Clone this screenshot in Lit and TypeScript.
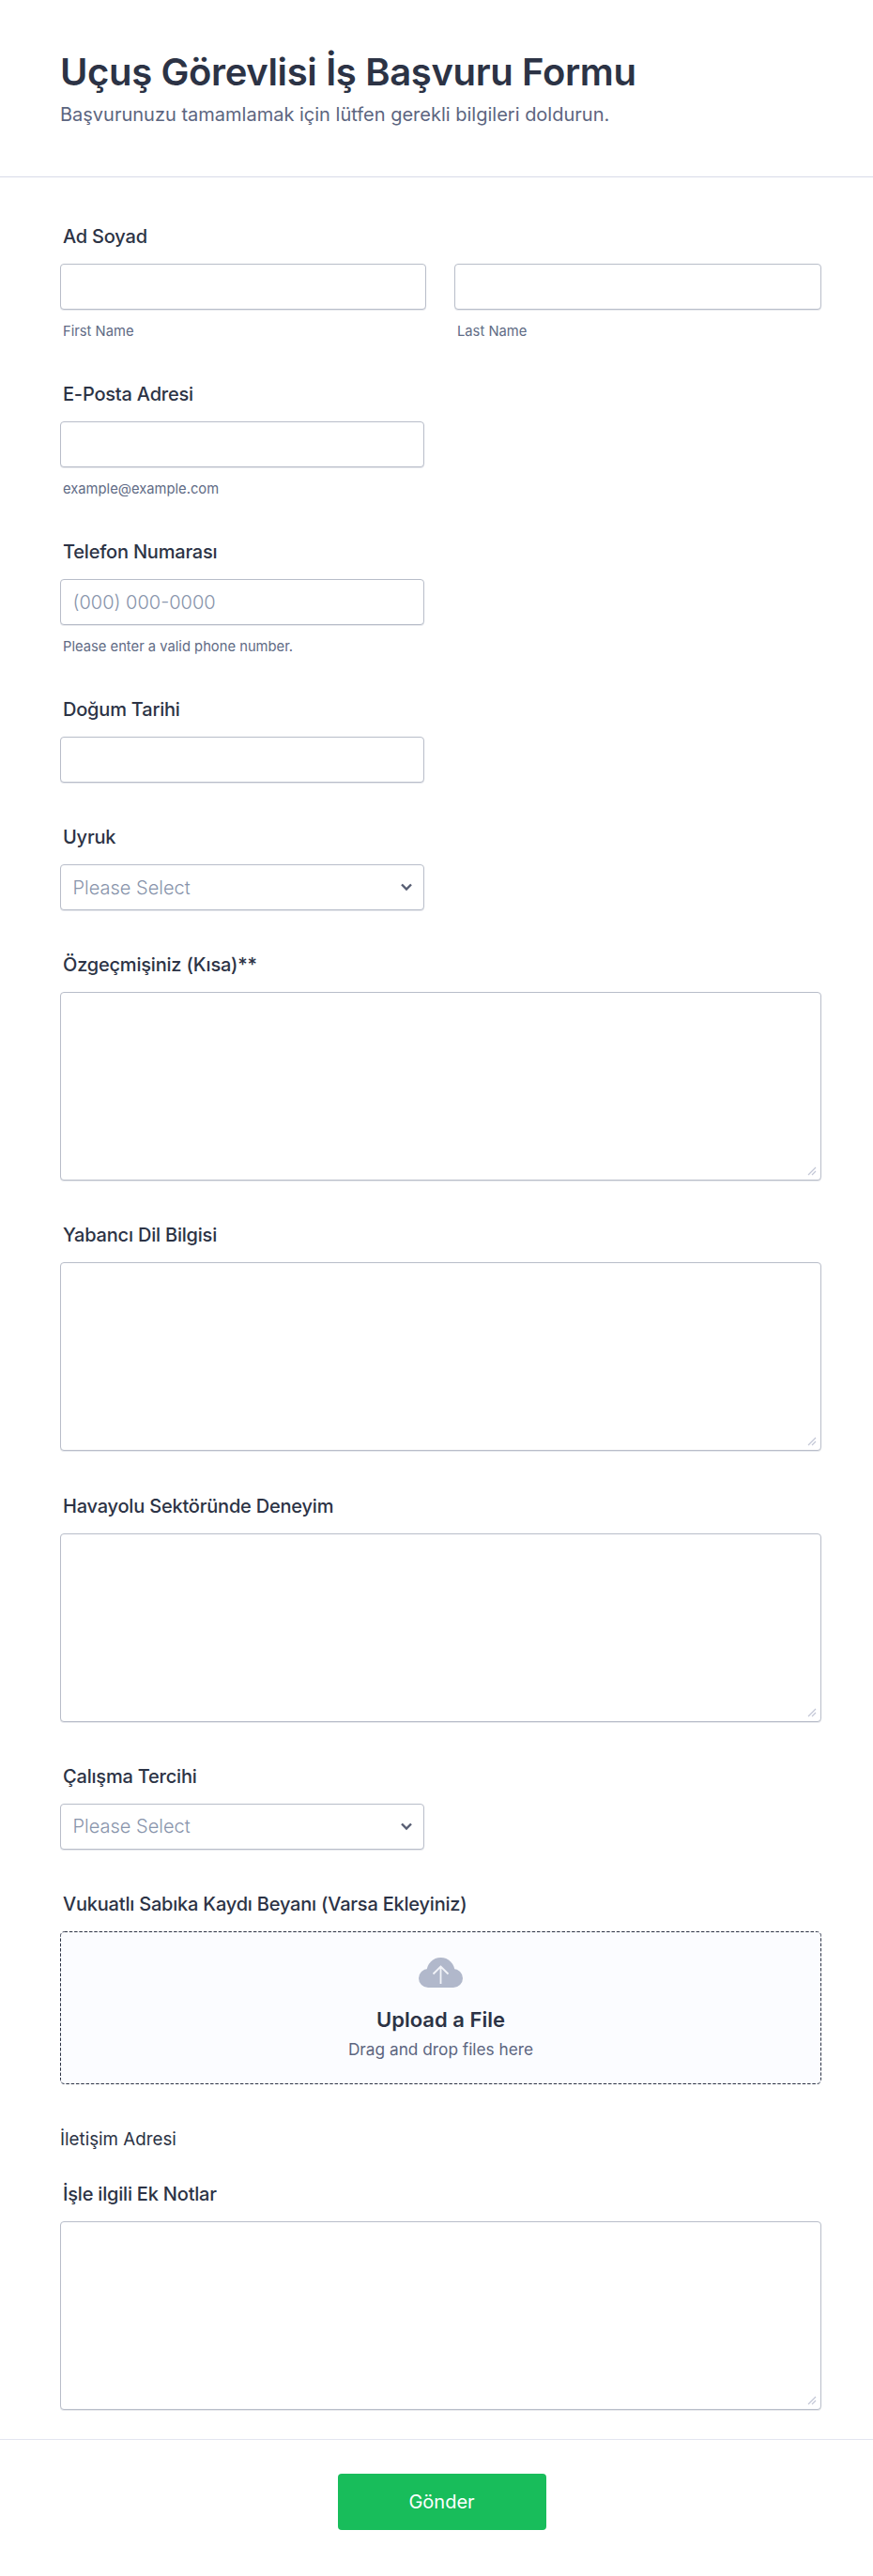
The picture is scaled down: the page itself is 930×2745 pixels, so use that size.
import { LitElement, html, css } from "lit";
import { customElement } from "lit/decorators.js";

const chevron = html`<svg class="chevron" width="14" height="10" viewBox="0 0 14 10" aria-hidden="true">
  <path d="M2 2.5 7 7.5 12 2.5" fill="none" stroke="#565d72" stroke-width="2.4" />
</svg>`;

const grip = html`<svg class="grip" width="10" height="10" viewBox="0 0 10 10" aria-hidden="true">
  <path d="M1 9 9 1M5 9 9 5" fill="none" stroke="#c3c7d6" stroke-width="1.2" />
</svg>`;

@customElement("app-root")
export class AppRoot extends LitElement {
  static styles = css`
    :host {
      display: block;
      background: #fff;
      color: #2c3345;
      font-family: Inter, "Noto Sans", sans-serif;
    }
    * {
      box-sizing: border-box;
    }
    .header {
      height: 189px;
      padding: 51px 64px 0;
      border-bottom: 1px solid #d8dae9;
    }
    h1 {
      margin: 0;
      font-size: 40px;
      line-height: 52px;
      font-weight: 600;
      letter-spacing: -0.36px;
    }
    .subtitle {
      margin: 5px 0 0;
      font-size: 20px;
      line-height: 28px;
      color: #5c6580;
    }
    .body {
      display: flex;
      flex-direction: column;
      padding: 50px 55px 0 64px;
    }
    .field {
      display: flex;
      flex-direction: column;
      margin-bottom: 45px;
    }
    .field.area {
      margin-bottom: 45.25px;
    }
    .field.upload-field {
      margin-bottom: 46px;
    }
    .field:last-child {
      margin-bottom: 31px;
    }
    .label {
      padding-left: 3px;
      margin-bottom: 16px;
      font-size: 20px;
      line-height: 26px;
      font-weight: 500;
      letter-spacing: -0.2px;
    }
    .half {
      width: 388px;
    }
    .pair {
      display: grid;
      grid-template-columns: 390px 391px;
      gap: 30px;
    }
    input,
    select,
    textarea {
      display: block;
      width: 100%;
      height: 49px;
      margin: 0;
      padding: 0 12.5px;
      border: 1px solid #b8bdc9;
      border-radius: 4px;
      box-shadow: 0 1px 0 rgba(184, 189, 201, 0.35);
      background: #fff;
      font: 300 20px Inter, sans-serif;
      color: #8894ab;
      outline: none;
    }
    input::placeholder {
      color: #8894ab;
      opacity: 1;
    }
    select {
      appearance: none;
    }
    textarea {
      height: 201px;
      resize: none;
    }
    .control {
      position: relative;
    }
    .chevron {
      position: absolute;
      top: 19px;
      right: 12px;
      pointer-events: none;
    }
    .grip {
      position: absolute;
      right: 5px;
      bottom: 5px;
      pointer-events: none;
    }
    .sub {
      padding-left: 3px;
      margin-top: 15px;
      font-size: 14.75px;
      line-height: 17px;
      color: #5f6b85;
    }
    .upload {
      position: relative;
      display: flex;
      flex-direction: column;
      align-items: center;
      height: 163px;
      padding-top: 28px;
      border-radius: 4px;
      background: #fbfcff;
    }
    .upload svg {
      display: block;
    }
    .upload .dashes {
      position: absolute;
      top: 0;
      left: 0;
      pointer-events: none;
    }
    .upload strong {
      margin-top: 20px;
      font-size: 22px;
      line-height: 28px;
      font-weight: 600;
    }
    .upload span {
      margin-top: 6px;
      font-size: 17.25px;
      line-height: 24px;
      color: #5c6580;
    }
    .plain {
      margin-bottom: 32px;
      font-size: 18.75px;
      line-height: 26px;
    }
    .footer {
      display: flex;
      justify-content: center;
      padding: 36px 0 49px;
      border-top: 1px solid #e3e5f0;
    }
    button {
      width: 222px;
      height: 60px;
      margin-left: 11px;
      border: 0;
      border-radius: 4px;
      background: #18bd5b;
      color: #fff;
      font: 400 20px Inter, sans-serif;
    }
  `;

  private textarea(label: string) {
    return html`<div class="field area">
      <div class="label">${label}</div>
      <div class="control"><textarea></textarea>${grip}</div>
    </div>`;
  }

  private select(label: string) {
    return html`<div class="field">
      <div class="label">${label}</div>
      <div class="control half">
        <select><option>Please Select</option></select>
        ${chevron}
      </div>
    </div>`;
  }

  render() {
    return html`
      <header class="header">
        <h1>Uçuş Görevlisi İş Başvuru Formu</h1>
        <p class="subtitle">Başvurunuzu tamamlamak için lütfen gerekli bilgileri doldurun.</p>
      </header>
      <main class="body">
        <div class="field">
          <div class="label">Ad Soyad</div>
          <div class="pair">
            <div><input type="text" /><div class="sub">First Name</div></div>
            <div><input type="text" /><div class="sub">Last Name</div></div>
          </div>
        </div>
        <div class="field">
          <div class="label">E-Posta Adresi</div>
          <div class="half"><input type="text" /><div class="sub">example@example.com</div></div>
        </div>
        <div class="field">
          <div class="label">Telefon Numarası</div>
          <div class="half">
            <input type="text" placeholder="(000) 000-0000" />
            <div class="sub">Please enter a valid phone number.</div>
          </div>
        </div>
        <div class="field">
          <div class="label">Doğum Tarihi</div>
          <div class="half"><input type="text" /></div>
        </div>
        ${this.select("Uyruk")}
        ${this.textarea("Özgeçmişiniz (Kısa)**")}
        ${this.textarea("Yabancı Dil Bilgisi")}
        ${this.textarea("Havayolu Sektöründe Deneyim")}
        ${this.select("Çalışma Tercihi")}
        <div class="field upload-field">
          <div class="label">Vukuatlı Sabıka Kaydı Beyanı (Varsa Ekleyiniz)</div>
          <div class="upload">
            <svg class="dashes" width="811" height="163" viewBox="0 0 811 163" aria-hidden="true">
              <rect x="0.5" y="0.5" width="810" height="162" rx="4" fill="none" stroke="#2c3345" stroke-dasharray="3.5 1.8" />
            </svg>
            <svg width="47" height="32" viewBox="0 0 47 32" aria-hidden="true">
              <g fill="#b1b8cb">
                <circle cx="23.500" cy="15" r="15" />
                <circle cx="10" cy="22" r="10" />
                <circle cx="37" cy="22" r="10" />
                <rect x="10" y="15" width="27" height="17" />
              </g>
              <path d="M23.500 28V10M15.500 17.500 23.500 9.500 31.500 17.500" fill="none" stroke="#f3f4f9" stroke-width="1.800" />
            </svg>
            <strong>Upload a File</strong>
            <span>Drag and drop files here</span>
          </div>
        </div>
        <div class="plain">İletişim Adresi</div>
        ${this.textarea("İşle ilgili Ek Notlar")}
      </main>
      <footer class="footer"><button>Gönder</button></footer>
    `;
  }
}
